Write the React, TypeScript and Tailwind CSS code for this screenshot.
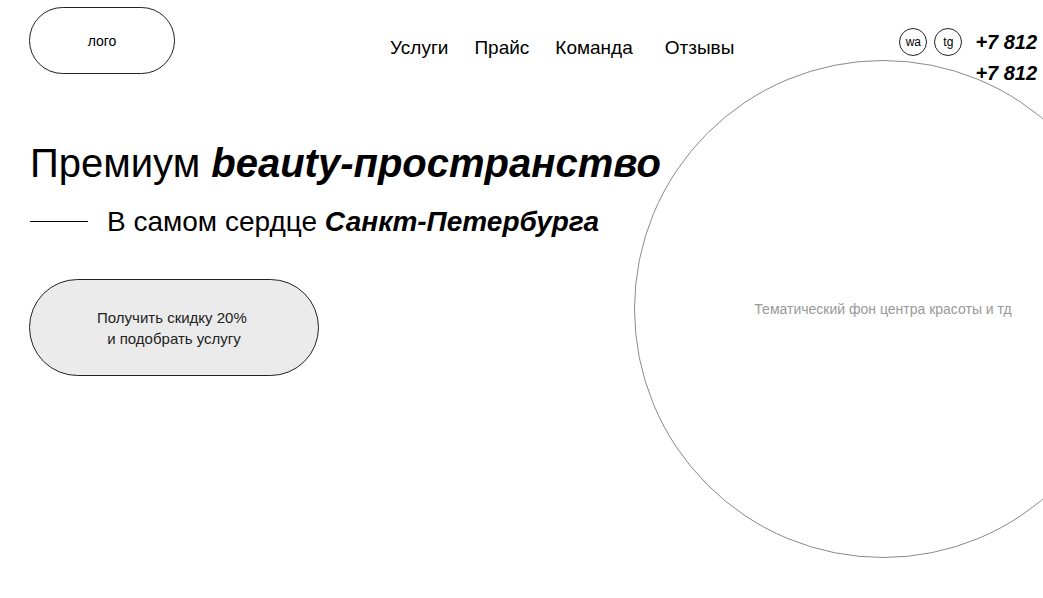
import React from 'react';

const App: React.FC = () => {
  return (
    <div className="relative h-[598px] w-full overflow-hidden bg-white font-['Liberation_Sans',Arial,sans-serif] text-black">
      <div className="absolute left-[634px] top-[60px] flex h-[498px] w-[498px] items-center justify-center rounded-full border border-[#8a8a8a]">
        <span className="text-sm text-[#999]">Тематический фон центра красоты и тд</span>
      </div>

      <header className="relative flex items-start pl-[29px] pt-[7px]">
        <div className="flex h-[67px] w-[146px] items-center justify-center rounded-[34px] border border-[#222]">
          <span className="text-sm">лого</span>
        </div>
        <nav className="ml-[215px] mt-[29px] flex text-[19px] leading-[24px]">
          <a className="mr-[26px]">Услуги</a>
          <a className="mr-[26px]">Прайс</a>
          <a className="mr-[32px]">Команда</a>
          <a>Отзывы</a>
        </nav>
        <div className="ml-[165px] mt-[21px] flex h-[28px] gap-[7px]">
          <div className="flex h-[28px] w-[28px] items-center justify-center rounded-full border border-[#222] text-xs">wa</div>
          <div className="flex h-[28px] w-[28px] items-center justify-center rounded-full border border-[#222] text-xs">tg</div>
        </div>
        <div className="ml-[13px] mt-[20px] whitespace-nowrap text-xl font-bold italic leading-[31px]">
          <div>+7 812</div>
          <div>+7 812</div>
        </div>
      </header>

      <main className="relative pl-[30px] pt-[51px]">
        <h1 className="text-[40px] font-normal leading-[46px]">
          Премиум <b className="italic">beauty-пространство</b>
        </h1>
        <div className="mt-[20px] flex items-center">
          <div className="mb-[2px] h-px w-[58px] bg-black"></div>
          <p className="ml-[19px] text-[28px] leading-[32px]">
            В самом сердце <b className="italic">Санкт-Петербурга</b>
          </p>
        </div>
        <button className="-ml-px mt-[41px] flex h-[97px] w-[290px] items-center justify-center rounded-[49px] border border-[#222] bg-[#ebebeb] text-center text-[15px] leading-[21px] text-[#222]">
          <span>
            Получить скидку 20%{'\u00a0'}
            <br />
            и подобрать услугу
          </span>
        </button>
      </main>
    </div>
  );
};

export default App;
